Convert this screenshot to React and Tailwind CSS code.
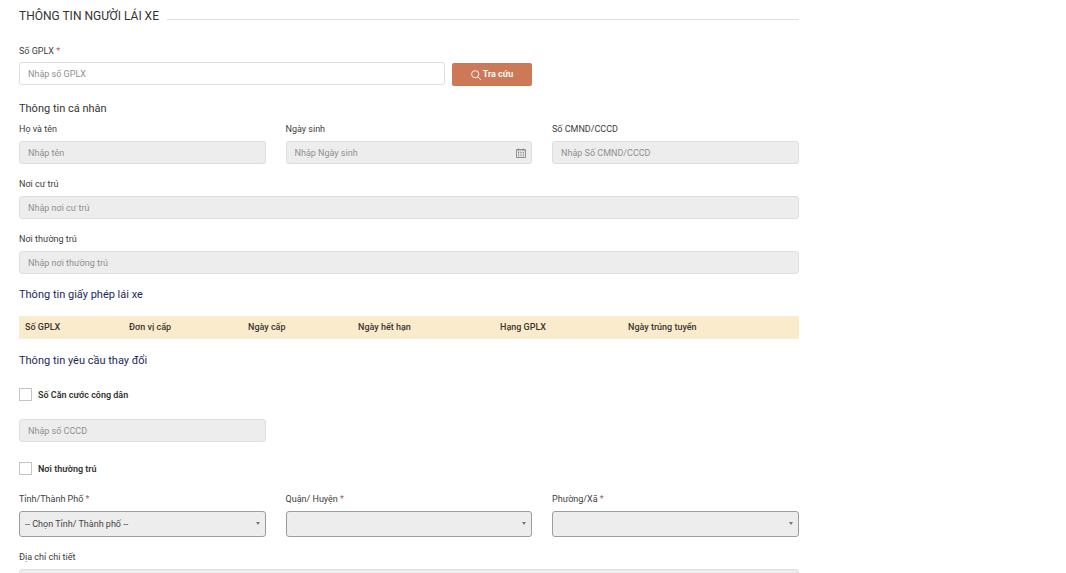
import { useState } from "react";

const LICENSE_COLUMNS = [
  { title: "Số GPLX", width: "w-[104px]" },
  { title: "Đơn vị cấp", width: "w-[119px]" },
  { title: "Ngày cấp", width: "w-[110px]" },
  { title: "Ngày hết hạn", width: "w-[142px]" },
  { title: "Hạng GPLX", width: "w-[128px]" },
  { title: "Ngày trúng tuyển", width: "w-[177px]" },
];

const inputClass =
  "block h-[23px] w-full rounded-[3px] border border-[#dfdfdf] px-2 text-[9px] text-[#444] placeholder:text-[#8f8f8f] placeholder:opacity-100 outline-none disabled:bg-[#ededed]";

function Label({ htmlFor, required, children }) {
  return (
    <label htmlFor={htmlFor} className="block text-[9px] leading-3 text-[#3c3c3c]">
      {children}
      {required && <span className="text-[#a4665c]"> *</span>}
    </label>
  );
}

function TextField({ id, label, ...props }) {
  return (
    <div className="flex flex-col gap-1.5">
      <Label htmlFor={id}>{label}</Label>
      <input id={id} type="text" className={inputClass} {...props} />
    </div>
  );
}

function SelectField({ id, label, placeholder = "" }) {
  return (
    <div className="flex flex-col gap-1.5">
      <Label htmlFor={id} required>
        {label}
      </Label>
      <div className="relative">
        <select
          id={id}
          disabled
          className="block h-[26px] w-full appearance-none rounded-[3px] border border-[#9c9c9c] bg-[#ededed] px-[5px] pt-px text-[9px] text-[#444] opacity-100"
        >
          <option>{placeholder}</option>
        </select>
        <svg
          viewBox="0 0 4 3"
          className="pointer-events-none absolute top-[11px] right-1.5 h-[3px] w-1"
          aria-hidden="true"
        >
          <path d="M0 0h4L2 3z" fill="#777" />
        </svg>
      </div>
    </div>
  );
}

function CheckField({ id, label }) {
  const [checked, setChecked] = useState(false);
  return (
    <div className="flex h-[13px] items-center gap-1.5">
      <input
        id={id}
        type="checkbox"
        checked={checked}
        onChange={(e) => setChecked(e.target.checked)}
        className="size-[13px] appearance-none border border-[#c4c4c4] bg-white checked:bg-[#cd7958]"
      />
      <label htmlFor={id} className="text-[9px] leading-3 font-semibold text-[#333]">
        {label}
      </label>
    </div>
  );
}

function SearchIcon() {
  return (
    <svg viewBox="0 0 10 10" className="size-2.5" fill="none" stroke="currentColor" aria-hidden="true">
      <circle cx="4.2" cy="4.2" r="3.6" strokeWidth="0.9" />
      <path d="M6.8 6.8 9.6 9.6" strokeWidth="1" strokeLinecap="round" />
    </svg>
  );
}

function CalendarIcon() {
  return (
    <svg viewBox="0 0 10 10" className="size-2.5" fill="none" stroke="#777" aria-hidden="true">
      <path d="M.5 1.5h9v8h-9z" strokeWidth="0.8" />
      <path d="M1 2.8h8" strokeWidth="0.5" />
      <path d="M2.5 .5v1.5M7.5 .5v1.5" strokeWidth="0.8" />
      <path d="M2 4.5h6M2 6.2h6M2 7.9h6" strokeWidth="0.9" strokeDasharray="1.2 1.2" />
    </svg>
  );
}

export default function App() {
  const [licenseNo, setLicenseNo] = useState("");

  return (
    <main className="w-3/4 bg-white pt-2 pr-px pb-6 pl-[19px] font-['Roboto','Noto_Sans',sans-serif]">
      <div className="flex items-baseline gap-2">
        <h1 className="text-[12px] leading-4 text-[#333]">THÔNG TIN NGƯỜI LÁI XE</h1>
        <div className="flex-1 border-b border-[#dedede]" />
      </div>

      <form className="mt-[21px]" onSubmit={(e) => e.preventDefault()}>
        <div className="grid grid-cols-3 gap-x-5">
          <div className="col-span-2 flex items-end gap-[7px]">
            <div className="flex flex-1 flex-col gap-[5px] pb-px">
              <Label htmlFor="license" required>
                Số GPLX
              </Label>
              <input
                id="license"
                type="text"
                placeholder="Nhập số GPLX"
                value={licenseNo}
                onChange={(e) => setLicenseNo(e.target.value)}
                className={inputClass}
              />
            </div>
            <button
              type="submit"
              className="flex h-[23px] w-20 items-center justify-center gap-0.5 rounded-[2px] bg-[#cd7958] text-[9px] font-semibold text-white"
            >
              <SearchIcon />
              Tra cứu
            </button>
          </div>
        </div>

        <h2 className="mt-[15px] text-[11px] leading-4 text-[#333]">Thông tin cá nhân</h2>
        <div className="mt-1.5 flex flex-col gap-3.5">
          <div className="grid grid-cols-3 gap-x-5">
            <TextField id="name" label="Họ và tên" placeholder="Nhập tên" disabled />
            <div className="relative">
              <TextField id="birthday" label="Ngày sinh" placeholder="Nhập Ngày sinh" disabled />
              <button type="button" disabled aria-label="Ngày sinh" className="absolute right-1.5 bottom-1.5">
                <CalendarIcon />
              </button>
            </div>
            <TextField id="id-number" label="Số CMND/CCCD" placeholder="Nhập Số CMND/CCCD" disabled />
          </div>
          <TextField id="residence" label="Nơi cư trú" placeholder="Nhập nơi cư trú" disabled />
          <TextField id="permanent" label="Nơi thường trú" placeholder="Nhập nơi thường trú" disabled />
        </div>

        <h2 className="mt-[13px] text-[11px] leading-4 text-[#1b2a57]">Thông tin giấy phép lái xe</h2>
        <table className="mt-[13px] w-full table-fixed bg-[#faebcc]">
          <thead>
            <tr className="h-[23px]">
              {LICENSE_COLUMNS.map(({ title, width }) => (
                <th
                  key={title}
                  scope="col"
                  className={`${width} px-1.5 pb-0.5 text-left text-[9px] leading-3 font-medium text-[#3c3530]`}
                >
                  {title}
                </th>
              ))}
            </tr>
          </thead>
        </table>

        <h2 className="mt-3.5 text-[11px] leading-4 text-[#1b2a57]">Thông tin yêu cầu thay đổi</h2>
        <div className="mt-[19px]">
          <CheckField id="change-id" label="Số Căn cước công dân" />
        </div>
        <div className="mt-[18px] grid grid-cols-3 gap-x-5">
          <input
            type="text"
            aria-label="Số Căn cước công dân"
            placeholder="Nhập số CCCD"
            disabled
            className={inputClass}
          />
        </div>
        <div className="mt-5">
          <CheckField id="change-address" label="Nơi thường trú" />
        </div>

        <div className="mt-[18px] grid grid-cols-3 gap-x-5">
          <SelectField id="province" label="Tỉnh/Thành Phố" placeholder="-- Chọn Tỉnh/ Thành phố --" />
          <SelectField id="district" label="Quận/ Huyện" />
          <SelectField id="ward" label="Phường/Xã" />
        </div>
        <div className="mt-3.5">
          <TextField id="address" label="Địa chỉ chi tiết" disabled />
        </div>
      </form>
    </main>
  );
}
